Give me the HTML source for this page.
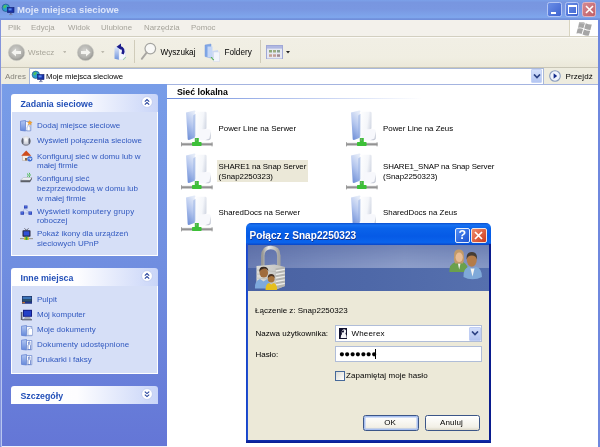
<!DOCTYPE html>
<html lang="pl"><head><meta charset="utf-8"><title>Moje miejsca sieciowe</title>
<style>
*{box-sizing:border-box;margin:0;padding:0}
html,body{width:600px;height:447px;overflow:hidden;background:#fff}
body{will-change:transform;font-family:"Liberation Sans",sans-serif;font-size:7.4px;color:#000;position:relative}
.a{position:absolute}
.t{position:absolute;white-space:nowrap;line-height:10px;height:10px;font-size:8px}
#title{left:0;top:0;width:600px;height:20px;background:linear-gradient(#7ba1e9 0,#7896e0 12%,#7997e1 45%,#7ea5ec 84%,#7ea5ec 89%,#6f8eda 94%,#7190dc 100%)}
#title .tt{left:17px;top:5.300px;font-weight:bold;font-size:9.550px;color:#dce5fa}
.wb{position:absolute;top:2.300px;width:14.800px;height:14.800px;border:1px solid #b4c6f4;border-radius:2.500px}
#menu{left:0;top:20px;width:600px;height:17px;background:#f3f1eb;border-bottom:1px solid #d2cfc0}
#menu .t{top:3.300px;color:#a5a39a;font-size:7.9px}
#tool{left:0;top:37px;width:600px;height:31px;background:linear-gradient(#f1efe5,#f0eee2 70%,#ebe8d9);border-bottom:1px solid #c9c6b6;box-shadow:inset 0 1px 0 #fbfaf6}
#addr{left:0;top:68px;width:600px;height:17px;background:#eeecdf;border-bottom:1px solid #c9c5b2}
#side{left:0;top:84px;width:166.800px;height:361.500px;background:linear-gradient(#789de8,#708ee0 50%,#6476d6)}
.ph{position:absolute;left:10.500px;width:147.700px;height:18px;border-radius:3px 3px 0 0;background:linear-gradient(90deg,#fff 0,#fdfdff 45%,#c9d5f8 100%)}
.ph .t{left:10px;top:5px;font-weight:bold;font-size:8.8px;color:#2350b8}
.pb{position:absolute;left:10.500px;width:147.700px;background:#d6dff7;border:1px solid #fff;border-top:none}
.lk{position:absolute;white-space:nowrap;color:#3058bf;font-size:8px;line-height:10px;height:10px}
.chev{position:absolute;left:130.300px;top:2px;width:12px;height:12px}
.it{position:absolute;white-space:nowrap;font-size:7.900px;line-height:10px}
</style></head><body>

<!-- main window -->
<div id="title" class="a">
  <svg class="a" style="left:1px;top:3px" width="14" height="13" viewBox="0 0 14 13"><circle cx="4.800" cy="4.800" r="3.700" fill="#2c9ccc" stroke="#1c4c7c" stroke-width=".6"/><path d="M2.500 3.200q1.200-1.500 3-1 .5 1.500-1 2.500t-2-.0z" fill="#4cc060"/><rect x="6.500" y="4.500" width="6.500" height="5" fill="#1a34a8" stroke="#0c1c70" stroke-width=".6"/><rect x="7.600" y="5.400" width="3" height="2" fill="#5c8cf0"/><rect x="9.200" y="9.800" width="1.300" height="1.600" fill="#50588c"/><rect x="8" y="11.200" width="3.600" height=".9" fill="#7c84a8"/></svg>
  <div class="t tt">Moje miejsca sieciowe</div>
  <div class="wb" style="left:546.800px;background:linear-gradient(135deg,#6a8ee6,#3f64d0)"><div class="a" style="left:3px;top:9px;width:5px;height:2px;background:#fff"></div></div>
  <div class="wb" style="left:564.600px;background:linear-gradient(135deg,#6a8ee6,#3f64d0)"><div class="a" style="left:2px;top:2px;width:9px;height:9px;border:1px solid #fff;border-top-width:2px"></div></div>
  <div class="wb" style="left:581.500px;border-color:#e4b4bc;background:linear-gradient(135deg,#d48890,#c06068)"><svg class="a" style="left:2px;top:2px" width="9" height="9" viewBox="0 0 9 9"><path d="M1 1l7 7M8 1l-7 7" stroke="#fff" stroke-width="1.6"/></svg></div>
</div>

<div id="menu" class="a">
  <div class="t" style="left:8px">Plik</div>
  <div class="t" style="left:31px">Edycja</div>
  <div class="t" style="left:68px">Widok</div>
  <div class="t" style="left:101px">Ulubione</div>
  <div class="t" style="left:144px">Narzędzia</div>
  <div class="t" style="left:191px">Pomoc</div>
  <div class="a" style="left:569px;top:0;width:29px;height:16px;background:#fff;border-left:1px solid #d8d4c0"></div>
  <svg class="a" style="left:576px;top:1px" width="17" height="15" viewBox="0 0 17 15"><path d="M3.200 1.200q3-.8 5.800.8l-1.600 5.200q-2.600-1.300-5.400-.5zM9.800 2.300q3 1.500 6 1.300l-1.400 5.300q-3 .2-6.200-1.400zM1.700 7.500q2.800-.8 5.400.6l-1.500 5q-2.400-1.200-5.200-.5zM8 8.400q3.200 1.600 6.200 1.400l-1.400 4.800q-3 .2-6.300-1.200z" fill="#a6a6a6"/><path d="M3.200 1.200q3-.8 5.800.8l-.4 1.300q-2.800-1.500-5.800-.8z" fill="#c4c4c4"/></svg>
</div>

<div id="tool" class="a">
  <!-- back -->
  <svg class="a" style="left:7px;top:5.800px" width="19" height="19" viewBox="0 0 19 19"><defs><radialGradient id="gr" cx=".45" cy=".4" r=".62"><stop offset="0" stop-color="#d4d4d0"/><stop offset=".7" stop-color="#b0b0ac"/><stop offset="1" stop-color="#8e8e8a"/></radialGradient></defs><circle cx="9.500" cy="9.500" r="8.100" fill="url(#gr)" stroke="#c8c8c2" stroke-width=".7"/><path d="M4.5 9.5l4.5-4v2.6h5v2.8h-5v2.6z" fill="#f4f4f0"/></svg>
  <div class="t" style="left:28px;top:10.500px;color:#a8a69a;font-size:8px">Wstecz</div>
  <svg class="a" style="left:62.500px;top:13.500px" width="3.500" height="2.300"><path d="M0 0h3.500l-1.750 2.300z" fill="#bcbaae"/></svg>
  <svg class="a" style="left:76px;top:5.800px" width="19" height="19" viewBox="0 0 19 19"><circle cx="9.500" cy="9.500" r="8.100" fill="url(#gr)" stroke="#c8c8c2" stroke-width=".7"/><path d="M14.5 9.5l-4.500-4v2.600h-5v2.800h5v2.600z" fill="#f4f4f0"/></svg>
  <svg class="a" style="left:101px;top:13.500px" width="3.500" height="2.300"><path d="M0 0h3.500l-1.750 2.300z" fill="#bcbaae"/></svg>
  <!-- up folder -->
  <svg class="a" style="left:113px;top:6px" width="15" height="18" viewBox="0 0 15 18"><defs><linearGradient id="upf" x1="0" y1="0" x2="0" y2="1"><stop offset="0" stop-color="#dfe8fa"/><stop offset="1" stop-color="#6f94dc"/></linearGradient></defs><path d="M1.500 4.500l4.500-.8v13l-4.500-1z" fill="url(#upf)"/><path d="M6 6h5.500q1 0 1 1v8.500q-.5 1.200-1.500 1.200h-5z" fill="#f6f8fd" stroke="#d4dcf0" stroke-width=".4"/><path d="M10 16.500q2-.5 2.500-2.500" stroke="#7cc07c" stroke-width=".8" fill="none"/><path d="M9.500 11q2.500-5.500-3-7" stroke="#1c1c8c" stroke-width="2.600" fill="none"/><path d="M3.500 3.800l4.500-3.300v6.300z" fill="#1c1c8c"/></svg>
  <div class="a" style="left:134px;top:3px;width:1px;height:23px;background:#d0ccba"></div>
  <!-- search -->
  <svg class="a" style="left:139px;top:5px" width="19" height="19" viewBox="0 0 19 19"><circle cx="11.300" cy="6.600" r="5.300" fill="#f8f8f6" stroke="#a4a4a0" stroke-width="1.200"/><path d="M7.600 10.600l-4.800 6.200" stroke="#a8a6a2" stroke-width="1.900" stroke-linecap="round"/></svg>
  <div class="t" style="left:160.500px;top:10.500px;font-size:8.200px">Wyszukaj</div>
  <!-- folders -->
  <svg class="a" style="left:203px;top:6px" width="19" height="20" viewBox="0 0 19 20"><path d="M2 2l6-1v14l-6-1.500z" fill="#7fa6e6" stroke="#7898d8" stroke-width=".5"/><path d="M4.500 3.500h5v11h-5z" fill="#c4d6f6"/><path d="M9 8l6-1v11l-6-1z" fill="#cddaf4"/><path d="M10.500 9h6v9.500h-6z" fill="#f2f5fc" stroke="#c8d2ea" stroke-width=".4"/><path d="M11 17q-2-.5-2.500-3" stroke="#4fb04a" stroke-width="1.200" fill="none"/></svg>
  <div class="t" style="left:224.500px;top:10.500px;font-size:8.200px">Foldery</div>
  <div class="a" style="left:260px;top:3px;width:1px;height:23px;background:#d0ccba"></div>
  <!-- views -->
  <svg class="a" style="left:266px;top:7.500px" width="17" height="14.500" viewBox="0 0 17 14.500"><rect x=".5" y=".5" width="16" height="13.500" fill="#e6e8f2" stroke="#a0a8d6"/><rect x="1" y="1" width="15" height="2.600" fill="#b0b8e2"/><g fill="#8ca878"><rect x="3" y="5" width="3" height="2.500"/><rect x="7" y="5" width="3" height="2.500" fill="#9cac80"/><rect x="11" y="5" width="3" height="2.500" fill="#88a090"/><rect x="3" y="9.300" width="3" height="2.500" fill="#c4a090"/><rect x="7" y="9.300" width="3" height="2.500" fill="#c09c94"/><rect x="11" y="9.300" width="3" height="2.500" fill="#a08890"/></g></svg>
  <svg class="a" style="left:285.500px;top:14px" width="4" height="2.500"><path d="M0 0h4l-2 2.500z" fill="#222"/></svg>
</div>

<div id="addr" class="a">
  <div class="t" style="left:5px;top:4.200px;color:#85837a;font-size:8px">Adres</div>
  <div class="a" style="left:29px;top:0;width:515px;height:16.300px;background:#fff;border:1px solid #a9b8d8;border-bottom:0"></div>
  <svg class="a" style="left:31px;top:2px" width="14" height="13" viewBox="0 0 14 13"><circle cx="4.800" cy="4.800" r="3.700" fill="#2c9ccc" stroke="#1c4c7c" stroke-width=".6"/><path d="M2.500 3.200q1.200-1.500 3-1 .5 1.500-1 2.500t-2-.0z" fill="#4cc060"/><rect x="6.500" y="4.500" width="6.500" height="5" fill="#1a34a8" stroke="#0c1c70" stroke-width=".6"/><rect x="7.600" y="5.400" width="3" height="2" fill="#5c8cf0"/><rect x="9.200" y="9.800" width="1.300" height="1.600" fill="#50588c"/><rect x="8" y="11.200" width="3.600" height=".9" fill="#7c84a8"/></svg>
  <div class="t" style="left:46px;top:4.200px;font-size:7.750px">Moje miejsca sieciowe</div>
  <div class="a" style="left:531px;top:1px;width:11.300px;height:14.300px;background:linear-gradient(#d4e0fb,#b4c6f2);border:1px solid #c4d2f6;border-radius:1px"></div>
  <svg class="a" style="left:532.600px;top:6.300px" width="8" height="5" viewBox="0 0 8 5"><path d="M1 .5l3 3 3-3" stroke="#2c4284" stroke-width="1.700" fill="none"/></svg>
  <svg class="a" style="left:549px;top:2.200px" width="12" height="12" viewBox="0 0 12 12"><circle cx="6" cy="6" r="5.300" fill="#f0f4fc" stroke="#8a9cbc" stroke-width="1.100"/><path d="M4.600 3.200l3.600 2.800-3.600 2.800z" fill="#142c8c"/></svg>
  <div class="t" style="left:565.600px;top:4.200px;font-size:8px;letter-spacing:.08px">Przejdź</div>
</div>

<!-- sidebar -->
<div id="side" class="a">
  <div class="ph" style="top:10px"><div class="t">Zadania sieciowe</div>
    <svg class="chev" viewBox="0 0 12 12"><circle cx="6" cy="6" r="5.400" fill="#fff" stroke="#b8c6ee" stroke-width=".7"/><path d="M3.800 5.600l2.200-2 2.200 2M3.800 8.600l2.200-2 2.200 2" stroke="#24429c" stroke-width="1.100" fill="none"/></svg></div>
  <div class="pb" style="top:28px;height:143.500px"></div>
  <div class="ph" style="top:183.700px"><div class="t">Inne miejsca</div>
    <svg class="chev" viewBox="0 0 12 12"><circle cx="6" cy="6" r="5.400" fill="#fff" stroke="#b8c6ee" stroke-width=".7"/><path d="M3.800 5.600l2.200-2 2.200 2M3.800 8.600l2.200-2 2.200 2" stroke="#24429c" stroke-width="1.100" fill="none"/></svg></div>
  <div class="pb" style="top:201.700px;height:88.300px"></div>
  <div class="ph" style="top:301.800px"><div class="t">Szczegóły</div>
    <svg class="chev" viewBox="0 0 12 12"><circle cx="6" cy="6" r="5.400" fill="#fff" stroke="#b8c6ee" stroke-width=".7"/><path d="M3.800 3.600l2.200 2 2.200-2M3.800 6.600l2.200 2 2.200-2" stroke="#24429c" stroke-width="1.100" fill="none"/></svg></div>
</div>

<!-- sidebar links -->
<div class="lk" style="left:37px;top:121.4px">Dodaj miejsce sieciowe</div>
<div class="lk" style="left:37px;top:136.2px">Wyświetl połączenia sieciowe</div>
<div class="lk" style="left:37px;top:151.6px">Konfiguruj sieć w domu lub w</div>
<div class="lk" style="left:37px;top:161.2px">małej firmie</div>
<div class="lk" style="left:37px;top:174.2px">Konfiguruj sieć</div>
<div class="lk" style="left:37px;top:183.9px">bezprzewodową w domu lub</div>
<div class="lk" style="left:37px;top:193.7px">w małej firmie</div>
<div class="lk" style="left:37px;top:206.8px;letter-spacing:.17px">Wyświetl komputery grupy</div>
<div class="lk" style="left:37px;top:216.4px">roboczej</div>
<div class="lk" style="left:37px;top:229.3px">Pokaż ikony dla urządzeń</div>
<div class="lk" style="left:37px;top:238.8px">sieciowych UPnP</div>
<div class="lk" style="left:37px;top:295.0px">Pulpit</div>
<div class="lk" style="left:37px;top:309.8px">Mój komputer</div>
<div class="lk" style="left:37px;top:325.3px">Moje dokumenty</div>
<div class="lk" style="left:37px;top:340.3px;letter-spacing:.07px">Dokumenty udostępnione</div>
<div class="lk" style="left:37px;top:355.2px">Drukarki i faksy</div>

<!-- sidebar icons -->
<svg width="0" height="0" style="position:absolute"><defs>
<linearGradient id="sf1" x1="0" y1="0" x2="0" y2="1"><stop offset="0" stop-color="#b4c8f2"/><stop offset="1" stop-color="#6488da"/></linearGradient>
<g id="sf"><path d="M.5 1.200l5-.7v10.500l-5-.6z" fill="url(#sf1)" stroke="#5c7cd0" stroke-width=".7"/><path d="M5.500 1.500h5.300v9.200h-5.300z" fill="#f6f8fd" stroke="#6482cc" stroke-width=".7"/></g>
<g id="sf2"><use href="#sf"/><path d="M7 10.500v-3.500q0-1 .6-1.600v-2.400q.6-.8 1.200 0v2.400q.7.600.7 1.600v3.500z" fill="#fff" stroke="#4c6cc0" stroke-width=".7"/></g>
</defs></svg>
<svg class="a" style="left:20px;top:120px" width="13" height="12" viewBox="0 0 13 12"><use href="#sf"/><path d="M7 10.800v-3q0-1 1-1.500v-1.800h1.200v1.800q1 .5 1 1.500v3z" fill="#fff" stroke="#6f88c8" stroke-width=".5"/><path d="M9.800 0l.8 1.800 1.900.3-1.400 1.300.4 1.900-1.700-1-1.700 1 .4-1.900-1.400-1.300 1.900-.3z" fill="#f0a030"/></svg>
<svg class="a" style="left:20px;top:135px" width="12" height="12" viewBox="0 0 12 12"><defs><radialGradient id="nc" cx=".5" cy=".35" r=".6"><stop offset="0" stop-color="#fff"/><stop offset="1" stop-color="#b8bcc8"/></radialGradient></defs><circle cx="6" cy="6" r="5" fill="url(#nc)"/><path d="M2.200 3q-1.600 3 0 6.200l1.300-.8v-4.600zM9.800 3q1.600 3 0 6.200l-1.300-.8v-4.600z" fill="#5a6070"/><path d="M3 8.500q3 1.800 6 0v1.200q-3 2-6 0z" fill="#8c92a4"/></svg>
<svg class="a" style="left:21px;top:150px" width="12" height="12" viewBox="0 0 12 12"><path d="M1.500 5.500h7.500v5h-7.500z" fill="#f2efe8" stroke="#a89880" stroke-width=".4"/><path d="M.2 5.800l5-5.300 5 5.300z" fill="#d04c1c"/><path d="M4 8h2v2.500h-2z" fill="#8a6a4a"/><circle cx="8.800" cy="8.800" r="2.600" fill="#3c6cd0"/><path d="M7.300 8.800h2.800M9 7.600l1.200 1.200-1.200 1.200" stroke="#fff" stroke-width=".7" fill="none"/></svg>
<svg class="a" style="left:20px;top:172px" width="13" height="12" viewBox="0 0 13 12"><path d="M.5 8l3-2.500h8.500l-2 3z" fill="#eceef2" stroke="#9a9ea8" stroke-width=".4"/><path d="M.5 8.300h9.500l2-3v1.700l-2 3.200h-9.500z" fill="#5c6068"/><path d="M7.500 4.800q1.500-1.500 0-3.300M9.200 5.200q2-2.200 0-4.400" stroke="#3cb43c" stroke-width=".9" fill="none"/></svg>
<svg class="a" style="left:20px;top:205px" width="13" height="11" viewBox="0 0 13 11"><path d="M4.500 3.500l-2.500 4.500h8.500z" fill="none" stroke="#9aa8d8" stroke-width=".6"/><path d="M4 .5h3.500v3h-3.500zM.5 6.500h3.500v3.300h-3.500zM8.500 6.500h3.500v3.300h-3.500z" fill="#2a40b0"/><path d="M4.600 1h2.200v1.600h-2.200zM1.100 7h2.200v1.700h-2.200zM9.100 7h2.200v1.700h-2.200z" fill="#4c6ce0"/></svg>
<svg class="a" style="left:20px;top:228px" width="13" height="13" viewBox="0 0 13 13"><path d="M4.500.3l2 2 2-2" stroke="#303040" stroke-width=".7" fill="none"/><rect x="2.500" y="2.300" width="8" height="6.400" rx=".8" fill="#26263c"/><rect x="3.600" y="3.300" width="5.800" height="4.300" fill="#3050d8"/><rect x="0" y="10" width="13" height="1.200" fill="#a0a098"/><rect x="4" y="9.300" width="5" height="2.600" fill="#d8c030"/><rect x="5.500" y="8.700" width="2" height="3.200" fill="#38a838"/></svg>
<svg class="a" style="left:22px;top:296px" width="10" height="8" viewBox="0 0 10 8"><rect width="10" height="7.500" fill="#1c2c5c"/><rect x=".6" y=".6" width="8.800" height="2.600" fill="#3c74b8"/><rect x=".6" y="3.200" width="8.800" height="2.400" fill="#2c5470"/><rect x="0" y="5.800" width="10" height="1.700" fill="#20348c"/><rect x=".3" y="5.900" width="2.600" height="1.400" fill="#c87830"/></svg>
<svg class="a" style="left:20px;top:309px" width="13" height="12" viewBox="0 0 13 12"><rect x="3" y=".8" width="9" height="7" fill="#141c84"/><rect x="4" y="1.800" width="7" height="5" fill="#2440c8"/><path d="M5 8h5l1.500 2.500h-8z" fill="#a8acb8"/><rect x=".8" y="3" width="1.600" height="8" fill="#5c6070"/><rect x="2" y="10.300" width="10" height="1" fill="#4c5060"/></svg>
<svg class="a" style="left:20.500px;top:324.500px" width="13" height="12" viewBox="0 0 13 12"><use href="#sf"/><path d="M7 4.500l2.500-1.500 2 .8v6.500h-4.500z" fill="#fff" stroke="#6f88c8" stroke-width=".5"/></svg>
<svg class="a" style="left:20.500px;top:339px" width="13" height="12" viewBox="0 0 13 12"><use href="#sf2"/></svg>
<svg class="a" style="left:20.500px;top:353.500px" width="13" height="12" viewBox="0 0 13 12"><use href="#sf2"/></svg>

<!-- content -->
<div class="a" style="left:0;top:445.500px;width:167px;height:1.500px;background:#eef1fa"></div>
<div class="a" style="left:166.800px;top:84px;width:431.200px;height:363px;background:#fff;border-top:1px solid #a4b4e0"></div>
<div class="a" style="left:598.300px;top:20px;width:1.700px;height:427px;background:#6f88de"></div>
<div class="a" style="left:0;top:20px;width:1.200px;height:427px;background:#8494dc"></div><div class="a" style="left:1.200px;top:84px;width:.8px;height:363px;background:#b8c6f0"></div>

<!-- items -->
<svg width="0" height="0" style="position:absolute"><defs>
<linearGradient id="fg1" x1="0.600" y1="0" x2="0.200" y2="1"><stop offset="0" stop-color="#e3eaf8"/><stop offset=".45" stop-color="#b4c6ee"/><stop offset="1" stop-color="#6c8dd6"/></linearGradient>
<linearGradient id="fg2" x1="0" y1="0" x2="1" y2=".3"><stop offset="0" stop-color="#fff"/><stop offset=".7" stop-color="#f4f6fa"/><stop offset="1" stop-color="#d6dbe6"/></linearGradient>
<linearGradient id="fg3" x1="0" y1="0" x2="0" y2="1"><stop offset="0" stop-color="#cacaca"/><stop offset=".5" stop-color="#8a8a8a"/><stop offset="1" stop-color="#bababa"/></linearGradient>
<g id="nf">
<path d="M5 3.500l8.300-2q1.200 0 1.200 1.200v25.800l-6.500 2.500q-1 .2-1.300-.8z" fill="url(#fg1)"/>
<path d="M13.800 2.800h10.400q1.300 0 1.300 1.300v15.400l-3.400 2v8.700h-8.300z" fill="url(#fg2)"/>
<path d="M8.500 30.800l6-3.600v-22.400l-2.200 1.600v20.600z" fill="#8ea9e2" opacity=".5"/>
<path d="M18.500 22q0-1.800 1.800-1.800h7.700q1.800 0 1.800 1.800v7.600q-.6 1.600-2.200 1.600h-9.100z" fill="#f7f8fc"/>
<path d="M29.800 22.500v7.100q-.6 1.600-2.200 1.600h-3.500l4.300-1.800z" fill="#c9cdd8"/>
<rect x="0" y="33.800" width="31.500" height="2.900" fill="url(#fg3)"/>
<rect x="0" y="33.200" width=".9" height="4.200" fill="#9a9a9a"/><rect x="30.600" y="33.200" width=".9" height="4.200" fill="#9a9a9a"/>
<path d="M13.800 29h4v4h2q.8 0 .8.800v2.400q0 .8-.8.800h-8q-.8 0-.8-.8v-2.400q0-.8.800-.8h2z" fill="#3dc038"/>
<rect x="14.600" y="29.600" width="1.400" height="2" fill="#9a9a9a" opacity=".7"/>
</g></defs></svg>
<div class="a" style="left:217px;top:160px;width:91px;height:21.5px;background:#ebe8d8"></div>
<svg class="a" style="left:181px;top:109px" width="34" height="39" viewBox="0 0 34 39"><use href="#nf"/></svg>
<div class="it" style="left:218.5px;top:123.9px">Power Line na Serwer</div>
<svg class="a" style="left:346px;top:109px" width="34" height="39" viewBox="0 0 34 39"><use href="#nf"/></svg>
<div class="it" style="left:383.0px;top:123.9px">Power Line na Zeus</div>
<svg class="a" style="left:181px;top:152px" width="34" height="39" viewBox="0 0 34 39"><use href="#nf"/></svg>
<div class="it" style="left:218.5px;top:162.1px"><span style="letter-spacing:-.04px">SHARE1 na Snap Server</span><br>(Snap2250323)</div>
<svg class="a" style="left:346px;top:152px" width="34" height="39" viewBox="0 0 34 39"><use href="#nf"/></svg>
<div class="it" style="left:383.0px;top:162.1px"><span style="letter-spacing:-.12px">SHARE1_SNAP na Snap Server</span><br>(Snap2250323)</div>
<svg class="a" style="left:181px;top:194px" width="34" height="39" viewBox="0 0 34 39"><use href="#nf"/></svg>
<div class="it" style="left:218.5px;top:208.4px">SharedDocs na Serwer</div>
<svg class="a" style="left:346px;top:194px" width="34" height="39" viewBox="0 0 34 39"><use href="#nf"/></svg>
<div class="it" style="left:383.0px;top:208.4px">SharedDocs na Zeus</div>
<div class="t" style="left:177px;top:87px;font-weight:bold;font-size:8.8px">Sieć lokalna</div>
<div class="a" style="left:167px;top:97.600px;width:255px;height:1px;background:linear-gradient(90deg,#6a8adc,#b4c4ee 50%,#fff)"></div>

<!-- dialog -->
<div class="a" id="dlg" style="left:245.600px;top:224px;width:245.400px;height:218.500px;background:linear-gradient(#0a2096,#0a2096) 0 20px/100% 100% no-repeat;border-radius:4px 4px 0 0">
  <div class="a" style="left:0;top:-.600px;width:245.400px;height:21.400px;border-radius:5px 5px 0 0;background:linear-gradient(#0a4ccc 0,#1872f2 9%,#0a63ea 25%,#065ae6 60%,#0a64ec 88%,#0a46c6 100%)"></div>
  <div class="t" style="left:4px;top:6.500px;font-weight:bold;font-size:10.1px;color:#fff;text-shadow:.5px .5px 0 #12308a">Połącz z Snap2250323</div>
  <div class="a" style="left:209px;top:3.600px;width:15.200px;height:15.200px;border:1px solid #e8effc;border-radius:2px;background:linear-gradient(135deg,#4f8cf4,#1c52d0)"><div class="t" style="left:3px;top:1.600px;color:#fff;font-weight:bold;font-size:12.500px;line-height:10px">?</div></div>
  <div class="a" style="left:225.800px;top:3.600px;width:15.200px;height:15.200px;border:1px solid #f4e4e0;border-radius:2px;background:linear-gradient(135deg,#ee8c6c,#cc3a1c)"><svg class="a" style="left:2px;top:2px" width="9" height="9" viewBox="0 0 9 9"><path d="M1 1l7 7M8 1l-7 7" stroke="#fff" stroke-width="1.700"/></svg></div>
  <div class="a" style="left:0;top:20px;width:2.400px;height:198.500px;background:linear-gradient(90deg,#1440c4,#2454d4)"></div>
  <div class="a" style="left:243px;top:20px;width:2.400px;height:198.500px;background:#0a1c8e"></div>
  <div class="a" style="left:0;top:216px;width:245.400px;height:2.500px;background:linear-gradient(#1030b0,#0a1c8e)"></div>
  <!-- banner -->
  <div class="a" style="left:2px;top:20.600px;width:241px;height:23.900px;background:linear-gradient(rgba(70,90,150,.38),rgba(120,140,190,0) 90%),linear-gradient(90deg,#6a7cb2 0,#7a8cbe 30%,#8c9dc9 65%,#8496c4 100%)"></div>
  <div class="a" style="left:2px;top:44.300px;width:241px;height:22.400px;background:linear-gradient(90deg,#4a62a2 0,#4e68a8 50%,#5670ae 100%)"></div>
  <svg class="a" style="left:8px;top:21px" width="34" height="46" viewBox="0 0 34 46">
    <defs><linearGradient id="lk1" x1="0" y1="0" x2="1" y2="0"><stop offset="0" stop-color="#9a9a96"/><stop offset=".35" stop-color="#ececea"/><stop offset="1" stop-color="#a4a4a0"/></linearGradient>
    <linearGradient id="lk2" x1="0" y1="0" x2="1" y2="0"><stop offset="0" stop-color="#dcdcd8"/><stop offset="1" stop-color="#c0c0bc"/></linearGradient></defs>
    <path d="M8.800 22v-11q0-8.500 8-8.500t8 8.500v11" fill="none" stroke="url(#lk1)" stroke-width="3.400"/>
    <path d="M2.500 21l18-1.500 10.500 2.500v19l-9 3.500-19.500-2.500z" fill="url(#lk2)"/><path d="M2.500 25l19 1.500M2.500 29l19 1.500M2.500 33l19 1.500M2.500 37l19 1.500" stroke="#b8b8b4" stroke-width="1" opacity=".7"/>
    <path d="M21.500 23.500l9.500-1.500v19l-9 3.500z" fill="#b4b4b0"/>
    <path d="M21.800 26l9-1.600M21.800 29.500l9-1.600M21.800 33l9-1.600M21.800 36.500l9-1.600M21.800 40l9-1.600" stroke="#ededea" stroke-width="1.300"/>
    <ellipse cx="9.800" cy="27.800" rx="4.300" ry="4.800" fill="#a06c3c"/><path d="M5.300 27q-.5-5.500 4.500-5.300 4.600.2 4.500 4.300-2-2.800-5-2.300-2.600.5-4 3.300z" fill="#3a2a20"/>
    <path d="M1 43.500q-.5-8 5-9.500l3.600 2.500 3.600-2.500q3 1.500 3 9.500z" fill="#7ea9dc"/>
    <ellipse cx="17.200" cy="33.800" rx="3.400" ry="3.800" fill="#a8743c"/><path d="M13.700 33q0-4 3.500-4t3.500 4q-1.500-2.300-3.500-2t-3.500 2z" fill="#4a3424"/>
    <path d="M11.500 45q0-6 3.500-7l2.300 1.500 2.300-1.500q3.600 1 3.600 7z" fill="#e6bf1e"/>
  </svg>
  <svg class="a" style="left:202px;top:25px" width="38" height="32" viewBox="0 0 38 32">
    <g transform="translate(-.6,-1.500)"><path d="M2 24.500q-.5-8 6-10l3.800 1.500 3.800-1.500q5 2 5 10z" fill="#6aa04c"/>
    <path d="M10.500 16l1.300 6 1.300-6z" fill="#f2f2ee"/>
    <path d="M6.800 9q-.8-7 4.800-7 5.500 0 4.800 7 .8 4-1 7h-7.600q-1.800-3-1-7z" fill="#c29a68"/>
    <ellipse cx="11.800" cy="9.800" rx="3.600" ry="4.800" fill="#e8bc94"/></g>
    <path d="M15.500 28q-.5-8.500 5.500-10.500l3.500 2 3.500-2q6 2 6 10.500-4.500 2.300-9.500 2.300t-9-2.300z" fill="#7fa9d9"/>
    <path d="M22.500 19.500l2 8 2-8z" fill="#f4f4f2"/>
    <ellipse cx="23.800" cy="10.800" rx="5" ry="7" fill="#b47c4a"/>
    <path d="M18.600 10.500q-.6-7.500 5.200-7.500t5.200 7.500q-1-4-5.200-4t-5.200 4z" fill="#463c34"/>
  </svg>
  <!-- body -->
  <div class="a" style="left:2px;top:66.600px;width:241px;height:149.400px;background:#ece9d8"></div>
  <div class="t" style="left:9.500px;top:81.800px">Łączenie z: Snap2250323</div>
  <div class="t" style="left:10px;top:104.500px">Nazwa użytkownika:</div>
  <div class="t" style="left:10px;top:125.500px">Hasło:</div>
  <div class="a" style="left:89px;top:101px;width:147px;height:16.600px;background:#fff;border:1px solid #b0bdd8"></div>
  <svg class="a" style="left:93px;top:104px" width="8.600" height="11" viewBox="0 0 10 11" preserveAspectRatio="none"><rect width="10" height="11" fill="#10102c"/><path d="M2 10q0-3 1.500-4-1.500-2 .5-4 2-1.500 4 0 .8 2-.5 3.500 1.500 1.500 1.500 4.500z" fill="#f4f4f8"/><path d="M3 3.500q1-1.500 3-1l-.5 2q-1.500-.5-2.500.5z" fill="#10102c"/></svg><div class="t" style="left:105.800px;top:105.300px;letter-spacing:.2px">Wheerex</div>
  <div class="a" style="left:223px;top:102.500px;width:12px;height:14px;background:linear-gradient(#d2defb,#b2c4f0);border:1px solid #c0cef4;border-radius:1px"></div>
  <svg class="a" style="left:225px;top:107.300px" width="8" height="5" viewBox="0 0 8 5"><path d="M1 .5l3 3 3-3" stroke="#2c4284" stroke-width="1.700" fill="none"/></svg>
  <div class="a" style="left:89px;top:122px;width:147px;height:15.500px;background:#fff;border:1px solid #b0bdd8"></div>
  <div class="t" id="pw" style="left:93.300px;top:124.800px;font-size:9.600px;letter-spacing:-.4px">●●●●●●●</div>
  <div class="a" style="left:129.600px;top:124.500px;width:1px;height:10.300px;background:#000"></div>
  <div class="a" style="left:89px;top:146.500px;width:10px;height:10px;background:linear-gradient(135deg,#dcdcd4,#fff);border:1px solid #46699a"></div>
  <div class="t" style="left:100.500px;top:147.400px;letter-spacing:.05px">Zapamiętaj moje hasło</div>
  <div class="a" style="left:117.500px;top:190.500px;width:55.500px;height:16px;border:1px solid #3c5688;border-radius:2.500px;background:linear-gradient(#fff,#f2f0e6 80%,#dcd8c8);box-shadow:inset 0 0 0 1.500px #a8c0f0"></div>
  <div class="t" style="left:138.700px;top:194px">OK</div>
  <div class="a" style="left:179px;top:190.500px;width:55px;height:16px;border:1px solid #3c5688;border-radius:2.500px;background:linear-gradient(#fff,#f2f0e6 80%,#dcd8c8)"></div>
  <div class="t" style="left:194.500px;top:194px;letter-spacing:.1px">Anuluj</div>
</div>

</body></html>
